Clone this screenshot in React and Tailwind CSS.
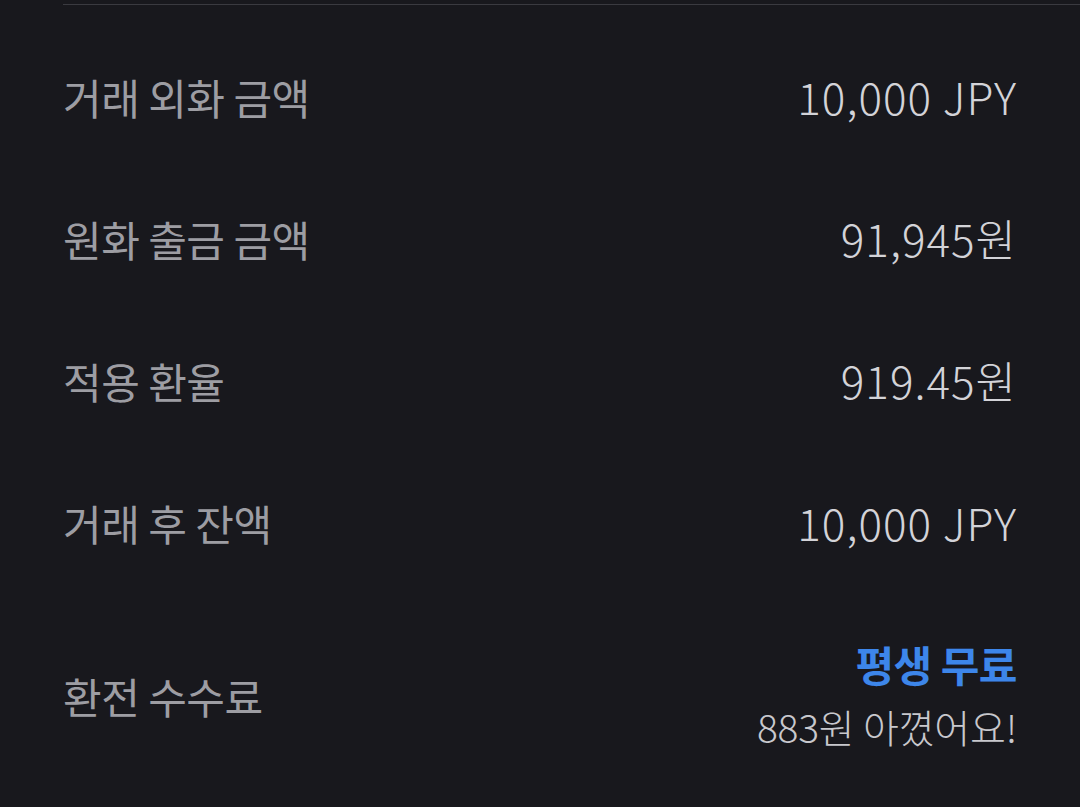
import React from "react";

const rows = [
  { label: "거래 외화 금액", value: "10,000 JPY" },
  { label: "원화 출금 금액", value: "91,945원" },
  { label: "적용 환율", value: "919.45원" },
  { label: "거래 후 잔액", value: "10,000 JPY" },
];

export default function App() {
  return (
    <div
      className="min-h-[807px] bg-[#18181d] pl-[63px] pt-[4px]"
      style={{ fontFamily: '"Noto Sans CJK KR", "Noto Sans", sans-serif' }}
    >
      <div className="h-px bg-[#3a3a40]" />
      <div className="pr-[63px] pt-[20px]">
        {rows.map((row) => (
          <div key={row.label} className="flex h-[142px] items-center justify-between">
            <span className="text-[42px] text-[#9d9da3] tracking-[-0.5px]">{row.label}</span>
            <span className="text-[44px] font-light text-[#d3d3d8] tracking-[1px]">{row.value}</span>
          </div>
        ))}
        <div className="flex items-center justify-between pt-[40px]">
          <span className="text-[42px] text-[#9d9da3] tracking-[-0.5px]">환전 수수료</span>
          <div className="flex flex-col items-end">
            <span className="text-[42px] font-bold leading-[62px] text-[#3d86ea] tracking-[-0.5px]">
              평생 무료
            </span>
            <span className="text-[39px] font-light leading-[62px] text-[#c8c8cd] tracking-[-0.2px]">
              883원 아꼈어요!
            </span>
          </div>
        </div>
      </div>
    </div>
  );
}
